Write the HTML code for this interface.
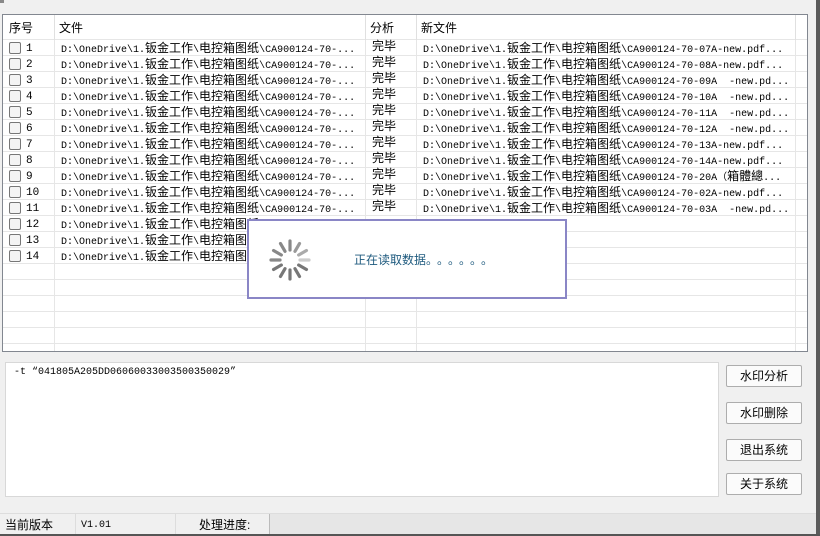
<!DOCTYPE html>
<html><head><meta charset="utf-8"><style>
*{margin:0;padding:0;box-sizing:border-box}
body{width:820px;height:536px;background:#f0f0f0;position:relative;overflow:hidden;font-family:"Liberation Sans","Noto Sans CJK SC",sans-serif;font-size:12px;color:#000}
.a{position:absolute}
.m{font-family:"Liberation Mono","Noto Sans CJK SC",monospace;font-size:10px;white-space:nowrap}
.m b{font-weight:normal;font-family:"Noto Sans CJK SC",sans-serif;font-size:12px}
.row{position:absolute;left:0;width:805px;height:16px;border-bottom:1px solid #e6e6e6;line-height:15px}
.row>div{line-height:15px}
.cb{position:absolute;left:6px;top:2px;width:12px;height:12px;border:1px solid #777;border-radius:2px;background:#f4f4f4}
.n{position:absolute;left:23px;top:2px !important;font-family:"Liberation Mono",monospace;font-size:11px}
.f{position:absolute;left:58px;top:0}
.s{position:absolute;left:369px;top:0;font-size:12px}
.nf{position:absolute;left:420px;top:0}
.vl{position:absolute;top:0;width:1px;height:336px;background:#e6e6e6}
.btn{position:absolute;left:726px;width:76px;height:22px;border:1px solid #adadad;background:#fbfbfb;border-radius:2px;text-align:center;line-height:20px;font-size:12px}
</style></head><body>
<div class="a" style="left:0;top:0;width:4px;height:3px;background:#888"></div>
<div class="a" style="left:816px;top:0;width:4px;height:536px;background:#5a5a5a"></div>
<div class="a" style="left:2px;top:14px;width:806px;height:338px;border:1px solid #828790;background:#fff;overflow:hidden">
 <div class="vl" style="left:51px"></div><div class="vl" style="left:362px"></div><div class="vl" style="left:413px"></div><div class="vl" style="left:792px"></div>
 <div class="a" style="left:0;top:0;width:805px;height:25px;background:#fff;border-bottom:1px solid #e6e6e6"></div>
 <div class="a" style="left:6px;top:4px;font-size:12px">序号</div>
 <div class="a" style="left:56px;top:4px;font-size:12px">文件</div>
 <div class="a" style="left:367px;top:4px;font-size:12px">分析</div>
 <div class="a" style="left:418px;top:4px;font-size:12px">新文件</div>
 <div class="a" style="left:51px;top:0;width:1px;height:25px;background:#e0e0e0"></div>
 <div class="a" style="left:362px;top:0;width:1px;height:25px;background:#e0e0e0"></div>
 <div class="a" style="left:413px;top:0;width:1px;height:25px;background:#e0e0e0"></div>
 <div class="a" style="left:792px;top:0;width:1px;height:25px;background:#e0e0e0"></div>
 <div class="a" style="left:0;top:25px;width:805px;height:320px">
 <div class="row m" style="top:0"><div class="cb"></div><div class="n">1</div><div class="f">D:\OneDrive\1.<b>钣金工作</b>\<b>电控箱图纸</b>\CA900124-70-...</div><div class="s">完毕</div><div class="nf">D:\OneDrive\1.<b>钣金工作</b>\<b>电控箱图纸</b>\CA900124-70-07A-new.pdf...</div></div>
 <div class="row m" style="top:16px"><div class="cb"></div><div class="n">2</div><div class="f">D:\OneDrive\1.<b>钣金工作</b>\<b>电控箱图纸</b>\CA900124-70-...</div><div class="s">完毕</div><div class="nf">D:\OneDrive\1.<b>钣金工作</b>\<b>电控箱图纸</b>\CA900124-70-08A-new.pdf...</div></div>
 <div class="row m" style="top:32px"><div class="cb"></div><div class="n">3</div><div class="f">D:\OneDrive\1.<b>钣金工作</b>\<b>电控箱图纸</b>\CA900124-70-...</div><div class="s">完毕</div><div class="nf">D:\OneDrive\1.<b>钣金工作</b>\<b>电控箱图纸</b>\CA900124-70-09A&nbsp;&nbsp;-new.pd...</div></div>
 <div class="row m" style="top:48px"><div class="cb"></div><div class="n">4</div><div class="f">D:\OneDrive\1.<b>钣金工作</b>\<b>电控箱图纸</b>\CA900124-70-...</div><div class="s">完毕</div><div class="nf">D:\OneDrive\1.<b>钣金工作</b>\<b>电控箱图纸</b>\CA900124-70-10A&nbsp;&nbsp;-new.pd...</div></div>
 <div class="row m" style="top:64px"><div class="cb"></div><div class="n">5</div><div class="f">D:\OneDrive\1.<b>钣金工作</b>\<b>电控箱图纸</b>\CA900124-70-...</div><div class="s">完毕</div><div class="nf">D:\OneDrive\1.<b>钣金工作</b>\<b>电控箱图纸</b>\CA900124-70-11A&nbsp;&nbsp;-new.pd...</div></div>
 <div class="row m" style="top:80px"><div class="cb"></div><div class="n">6</div><div class="f">D:\OneDrive\1.<b>钣金工作</b>\<b>电控箱图纸</b>\CA900124-70-...</div><div class="s">完毕</div><div class="nf">D:\OneDrive\1.<b>钣金工作</b>\<b>电控箱图纸</b>\CA900124-70-12A&nbsp;&nbsp;-new.pd...</div></div>
 <div class="row m" style="top:96px"><div class="cb"></div><div class="n">7</div><div class="f">D:\OneDrive\1.<b>钣金工作</b>\<b>电控箱图纸</b>\CA900124-70-...</div><div class="s">完毕</div><div class="nf">D:\OneDrive\1.<b>钣金工作</b>\<b>电控箱图纸</b>\CA900124-70-13A-new.pdf...</div></div>
 <div class="row m" style="top:112px"><div class="cb"></div><div class="n">8</div><div class="f">D:\OneDrive\1.<b>钣金工作</b>\<b>电控箱图纸</b>\CA900124-70-...</div><div class="s">完毕</div><div class="nf">D:\OneDrive\1.<b>钣金工作</b>\<b>电控箱图纸</b>\CA900124-70-14A-new.pdf...</div></div>
 <div class="row m" style="top:128px"><div class="cb"></div><div class="n">9</div><div class="f">D:\OneDrive\1.<b>钣金工作</b>\<b>电控箱图纸</b>\CA900124-70-...</div><div class="s">完毕</div><div class="nf">D:\OneDrive\1.<b>钣金工作</b>\<b>电控箱图纸</b>\CA900124-70-20A（<b>箱體總</b>...</div></div>
 <div class="row m" style="top:144px"><div class="cb"></div><div class="n">10</div><div class="f">D:\OneDrive\1.<b>钣金工作</b>\<b>电控箱图纸</b>\CA900124-70-...</div><div class="s">完毕</div><div class="nf">D:\OneDrive\1.<b>钣金工作</b>\<b>电控箱图纸</b>\CA900124-70-02A-new.pdf...</div></div>
 <div class="row m" style="top:160px"><div class="cb"></div><div class="n">11</div><div class="f">D:\OneDrive\1.<b>钣金工作</b>\<b>电控箱图纸</b>\CA900124-70-...</div><div class="s">完毕</div><div class="nf">D:\OneDrive\1.<b>钣金工作</b>\<b>电控箱图纸</b>\CA900124-70-03A&nbsp;&nbsp;-new.pd...</div></div>
 <div class="row m" style="top:176px"><div class="cb"></div><div class="n">12</div><div class="f">D:\OneDrive\1.<b>钣金工作</b>\<b>电控箱图纸</b>\CA900124-70-...</div></div>
 <div class="row m" style="top:192px"><div class="cb"></div><div class="n">13</div><div class="f">D:\OneDrive\1.<b>钣金工作</b>\<b>电控箱图纸</b>\CA900124-70-...</div></div>
 <div class="row m" style="top:208px"><div class="cb"></div><div class="n">14</div><div class="f">D:\OneDrive\1.<b>钣金工作</b>\<b>电控箱图纸</b>\CA900124-70-...</div></div>
 <div class="row" style="top:224px"></div><div class="row" style="top:240px"></div><div class="row" style="top:256px"></div><div class="row" style="top:272px"></div><div class="row" style="top:288px"></div><div class="row" style="top:304px"></div>
 </div>
</div>
<div class="a" style="left:247px;top:219px;width:320px;height:80px;border:2px solid #8a86c6;background:#fff">
 <svg class="a" style="left:16px;top:14px" width="50" height="50" viewBox="-25 -25 50 50">
  <g stroke-width="3.2" stroke-linecap="round">
   <line x1="0" y1="-10" x2="0" y2="-19" stroke="#888" transform="rotate(0)"/>
   <line x1="0" y1="-10" x2="0" y2="-19" stroke="#999" transform="rotate(30)"/>
   <line x1="0" y1="-10" x2="0" y2="-19" stroke="#aaa" transform="rotate(60)"/>
   <line x1="0" y1="-10" x2="0" y2="-19" stroke="#ccc" transform="rotate(90)"/>
   <line x1="0" y1="-10" x2="0" y2="-19" stroke="#777" transform="rotate(120)"/>
   <line x1="0" y1="-10" x2="0" y2="-19" stroke="#777" transform="rotate(150)"/>
   <line x1="0" y1="-10" x2="0" y2="-19" stroke="#777" transform="rotate(180)"/>
   <line x1="0" y1="-10" x2="0" y2="-19" stroke="#777" transform="rotate(210)"/>
   <line x1="0" y1="-10" x2="0" y2="-19" stroke="#777" transform="rotate(240)"/>
   <line x1="0" y1="-10" x2="0" y2="-19" stroke="#888" transform="rotate(270)"/>
   <line x1="0" y1="-10" x2="0" y2="-19" stroke="#888" transform="rotate(300)"/>
   <line x1="0" y1="-10" x2="0" y2="-19" stroke="#888" transform="rotate(330)"/>
  </g></svg>
 <div class="a" style="left:105px;top:30px;color:#1e5a7e;font-size:12px;white-space:nowrap">正在读取数据<span style="letter-spacing:5px">。。。。。。</span></div>
</div>
<div class="a" style="left:5px;top:362px;width:714px;height:135px;border:1px solid #d8d8d8;background:#fff"></div>
<div class="a m" style="left:14px;top:367px;font-size:10px">-t “041805A205DD06060033003500350029”</div>
<div class="btn" style="top:365px">水印分析</div>
<div class="btn" style="top:402px">水印删除</div>
<div class="btn" style="top:439px">退出系统</div>
<div class="btn" style="top:473px">关于系统</div>
<div class="a" style="left:0;top:513px;width:816px;height:1px;background:#ddd"></div>
<div class="a" style="left:5px;top:516px;font-size:12px">当前版本</div>
<div class="a" style="left:75px;top:514px;width:1px;height:20px;background:#ddd"></div>
<div class="a m" style="left:81px;top:520px">V1.01</div>
<div class="a" style="left:175px;top:514px;width:1px;height:20px;background:#ddd"></div>
<div class="a" style="left:199px;top:516px;font-size:12px">处理进度:</div>
<div class="a" style="left:269px;top:514px;width:547px;height:20px;background:#e6e6e6;border-left:1px solid #bbb"></div>
<div class="a" style="left:0;top:534px;width:820px;height:2px;background:#555"></div>
</body></html>
